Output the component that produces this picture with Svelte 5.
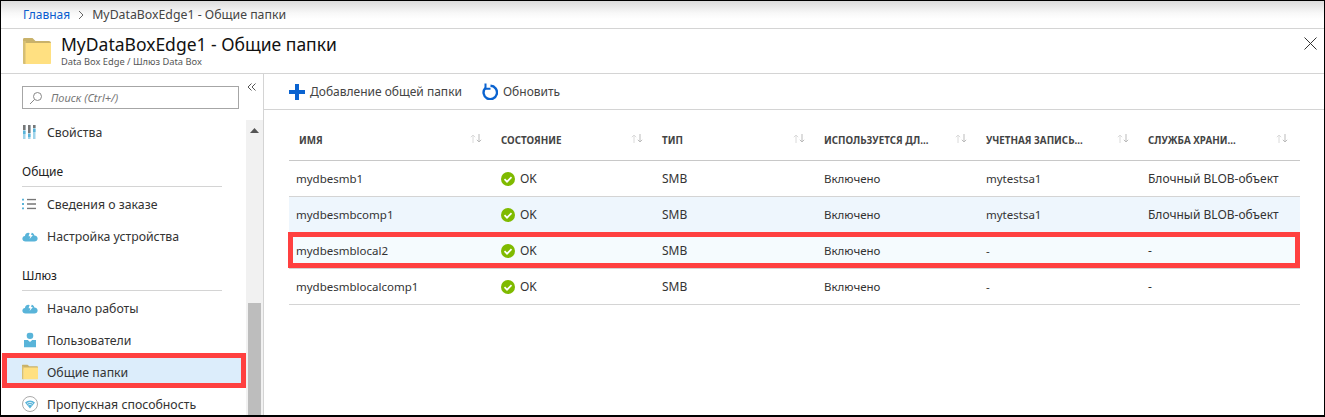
<script>
	const columns = [
		{ title: 'ИМЯ', cls: 'first' },
		{ title: 'СОСТОЯНИЕ' },
		{ title: 'ТИП' },
		{ title: 'ИСПОЛЬЗУЕТСЯ ДЛ...' },
		{ title: 'УЧЕТНАЯ ЗАПИСЬ...' },
		{ title: 'СЛУЖБА ХРАНИ...' }
	];

	const rows = [
		{ name: 'mydbesmb1', account: 'mytestsa1', service: 'Блочный BLOB-объект' },
		{ name: 'mydbesmbcomp1', account: 'mytestsa1', service: 'Блочный BLOB-объект', hover: true },
		{ name: 'mydbesmblocal2', account: '-', service: '-', marked: true },
		{ name: 'mydbesmblocalcomp1', account: '-', service: '-' }
	];
</script>

{#snippet cloud()}
	<svg class="icon" width="16" height="12" viewBox="0 0 22 16">
		<path fill="#59b4d9" d="M5 15.500c-2.800 0-4.500-1.700-4.500-3.800s1.600-3.500 3.500-3.700c.6-3 3-4.800 5.500-4.200l1 .2L9 8.500h2.500L10.500 12 15 6.500h-2.500l.8-3c2 .3 3.400 1.700 3.700 3.800 2.300 0 4.500 1.500 4.500 4s-2 4.200-4.500 4.200z"/>
	</svg>
{/snippet}

{#snippet folder(w, h)}
	<svg width={w} height={h} viewBox="0 0 28 26">
		<path fill="#c9b26a" d="M0 1.500C0 .7.500 0 1.300 0h8.200l3 3H26c1 0 2 .8 2 2v3H0z"/>
		<path fill="#d6bf74" d="M0 3h3v23H1c-.6 0-1-.4-1-1z"/>
		<path fill="#ffe081" d="M2.500 5H28v20c0 .6-.4 1-1 1H2.500z"/>
	</svg>
{/snippet}

<div class="page">
	<nav class="crumbs">
		<span class="link">Главная</span>
		<svg class="sep" width="7" height="10" viewBox="0 0 7 10"><path d="M1 1l4 4-4 4" fill="none" stroke="#666" stroke-width="1"/></svg>
		<span>MyDataBoxEdge1 - Общие папки</span>
	</nav>

	<header class="title">
		<span class="title-icon">{@render folder(28, 26)}</span>
		<div class="title-text">
			<h1>MyDataBoxEdge1 - Общие папки</h1>
			<p>Data Box Edge / Шлюз Data Box</p>
		</div>
		<svg class="close" width="13" height="13" viewBox="0 0 13 13"><path d="M.5.500l12 12M12.500.500l-12 12" stroke="#333" stroke-width="1" fill="none"/></svg>
	</header>

	<div class="body">
		<aside class="side">
			<div class="side-main">
				<div class="search-row">
					<div class="search">
						<svg width="14" height="14" viewBox="0 0 14 14"><circle cx="8.500" cy="5.500" r="4" fill="none" stroke="#888"/><path d="M5.500 8.500L1 13" stroke="#888" fill="none"/></svg>
						<span>Поиск (Ctrl+/)</span>
					</div>
					<svg class="collapse" width="9" height="8" viewBox="0 0 9 8"><path d="M4.500 .5L1 4l3.500 3.500M8.500 .5L5 4l3.500 3.500" fill="none" stroke="#555"/></svg>
				</div>

				<div class="item first-item">
					<svg class="icon" width="14" height="14" viewBox="0 0 14 14">
						<path fill="#9fd3ea" d="M1 0h2.500v14H1zM6 0h2.500v14H6zM11 0h2.500v14H11z"/>
						<path fill="#59b4d9" d="M1 6h2.500v3H1zM6 9h2.500v3H6zM11 4h2.500v3H11z"/>
						<path fill="#777" d="M1 0h2.500v5H1zM6 0h2.500v8H6zM11 0h2.500v3H11z"/>
					</svg>
					<span>Свойства</span>
				</div>

				<div class="group">Общие</div>
				<div class="item">
					<svg class="icon" width="14" height="11" viewBox="0 0 14 11">
						<path fill="#59b4d9" d="M0 0h2v2H0zM0 4.500h2v2H0zM0 9h2v2H0z"/>
						<path fill="#777" d="M5 .3h9v1.400H5zM5 4.800h9v1.400H5zM5 9.300h9v1.400H5z"/>
					</svg>
					<span>Сведения о заказе</span>
				</div>
				<div class="item">{@render cloud()}<span>Настройка устройства</span></div>

				<div class="group gateway">Шлюз</div>
				<div class="item">{@render cloud()}<span>Начало работы</span></div>
				<div class="item">
					<svg class="icon user" width="12" height="15" viewBox="0 0 12 15">
						<circle cx="6" cy="3.300" r="3.300" fill="#59b4d9"/>
						<path fill="#59b4d9" d="M0 7.500h3.800L6 9.500l2.200-2H12V15H0z"/>
					</svg>
					<span>Пользователи</span>
				</div>
				<div class="item active">
					<span class="icon">{@render folder(16, 15)}</span>
					<span>Общие папки</span>
				</div>
				<div class="item">
					<svg class="icon" width="16" height="16" viewBox="0 0 16 16">
						<circle cx="8" cy="8" r="7.500" fill="#fff" stroke="#aaa"/>
						<path fill="#59b4d9" d="M3 6.500C6 3.700 10 3.700 13 6.500L8 12.500z"/>
						<path fill="none" stroke="#fff" stroke-width=".8" d="M5 7.500c2-1.500 4-1.500 6 0M6.300 9c1-.8 2.400-.8 3.400 0"/>
					</svg>
					<span>Пропускная способность</span>
				</div>
			</div>

			<div class="scrollbar">
				<svg class="arrow" width="9" height="5" viewBox="0 0 9 5"><path d="M4.500 0L9 5H0z" fill="#555"/></svg>
				<div class="thumb"></div>
			</div>
		</aside>

		<main class="content">
			<div class="toolbar">
				<button>
					<svg width="16" height="16" viewBox="0 0 16 16"><path fill="#0a63d0" d="M6 0h4v6h6v4h-6v6H6v-6H0V6h6z"/></svg>
					<span>Добавление общей папки</span>
				</button>
				<button>
					<svg width="16" height="17" viewBox="0 0 16 17"><path fill="none" stroke="#0a63d0" stroke-width="2.400" d="M8.500 2.800A6.700 6.700 0 1 1 3.300 5"/><path fill="none" stroke="#0a63d0" stroke-width="2" d="M3.500 .5v5.200h5"/></svg>
					<span>Обновить</span>
				</button>
			</div>

			<div class="table">
				<div class="row head">
					{#each columns as col}
						<div class="cell {col.cls ?? ''}">
							<span class="label">{col.title}</span>
							<svg class="sort" width="12" height="9" viewBox="0 0 12 9">
								<path d="M3 9V1M.8 3.200L3 1l2.200 2.200" fill="none" stroke="#dadada"/>
								<path d="M9 0v8M6.800 5.800L9 8l2.200-2.200" fill="none" stroke="#bbb"/>
							</svg>
						</div>
					{/each}
				</div>
				{#each rows as row}
					<div class="row" class:hover={row.hover} class:marked={row.marked}>
						<div class="cell">{row.name}</div>
						<div class="cell status">
							<svg width="14" height="14" viewBox="0 0 14 14"><circle cx="7" cy="7" r="7" fill="#7fba00"/><path d="M3.500 7.200l2.500 2.500 4.500-4.500" fill="none" stroke="#fff" stroke-width="1.700"/></svg>
							<span>OK</span>
						</div>
						<div class="cell wide">SMB</div>
						<div class="cell">Включено</div>
						<div class="cell">{row.account}</div>
						<div class="cell wide">{row.service}</div>
					</div>
				{/each}
			</div>
		</main>
	</div>
</div>

<style>
	:global(body) {
		margin: 0;
		background: #fff;
	}

	.page {
		box-sizing: border-box;
		width: 1325px;
		height: 417px;
		display: flex;
		flex-direction: column;
		overflow: hidden;
		border: 1px solid #000;
		border-bottom-width: 2px;
		font-family: 'Noto Sans', 'Open Sans', sans-serif;
		font-size: 12px;
		color: #333;
	}

	.crumbs {
		height: 28px;
		flex: none;
		display: flex;
		align-items: center;
		gap: 8px;
		padding-left: 22px;
		box-sizing: border-box;
		border-bottom: 1px solid #d4d4d4;
		background: linear-gradient(#dcdcdc, #f8f8f8 12px, #fff 18px);
		color: #444;
		font-size: 12.300px;
	}

	.sep {
		margin-right: -1px;
	}

	.link {
		color: #0a5ccf;
		font-size: 12px;
	}

	.title {
		height: 45px;
		flex: none;
		box-sizing: border-box;
		display: flex;
		align-items: flex-start;
		border-bottom: 1px solid #d4d4d4;
		position: relative;
	}

	.title-icon {
		margin: 9px 0 0 22px;
		line-height: 0;
	}

	.title-text {
		margin: 3px 0 0 10px;
	}

	h1 {
		margin: 0;
		font-size: 17.500px;
		line-height: 24px;
		font-weight: 400;
		color: #111;
	}

	.title-text p {
		margin: 0;
		font-size: 9.300px;
		line-height: 11px;
		color: #555;
	}

	.close {
		position: absolute;
		right: 7px;
		top: 8px;
	}

	.body {
		flex: 1;
		display: flex;
		min-height: 0;
	}

	.side {
		width: 262px;
		flex: none;
		display: flex;
		border-right: 1px solid #d4d4d4;
		box-sizing: content-box;
		font-size: 12.300px;
	}

	.side-main {
		flex: 1;
		min-width: 0;
	}

	.search-row {
		height: 46px;
		display: flex;
		align-items: flex-start;
		position: relative;
	}

	.search {
		box-sizing: border-box;
		width: 217px;
		height: 23px;
		margin: 12px 0 0 21px;
		border: 1px solid #a6a6a6;
		display: flex;
		align-items: center;
		gap: 8px;
		padding-left: 6px;
		font-style: italic;
		color: #777;
		font-size: 11px;
	}

	.collapse {
		position: absolute;
		left: 246px;
		top: 9px;
	}

	.item {
		height: 32px;
		display: flex;
		align-items: center;
		padding-left: 46px;
		position: relative;
		color: #333;
	}

	.first-item {
		height: 24px;
	}

	.icon {
		position: absolute;
		left: 21px;
		top: 50%;
		transform: translateY(-50%);
		line-height: 0;
	}

	.user {
		left: 23px;
	}

	.group {
		height: 28px;
		margin: 15px 24px 0 21px;
		border-bottom: 1px solid #d4d4d4;
		line-height: 26px;
		color: #222;
		box-sizing: border-box;
		font-size: 12px;
	}

	.group + .item {
		margin-top: 1px;
	}

	.gateway {
		margin-top: 11px;
	}

	.active {
		background: #dcedfb;
		outline: 5px solid #ff4040;
		outline-offset: -5px;
		margin: -3px 0 0 1px;
		padding: 3px 0 0 45px;
		height: 35px;
		box-sizing: border-box;
	}

	.active .icon {
		left: 20px;
		top: 19px;
	}

	.scrollbar {
		width: 17px;
		flex: none;
		background: #f1f1f1;
		margin-top: 46px;
		position: relative;
		display: flex;
		flex-direction: column;
		align-items: center;
	}

	.arrow {
		margin-top: 8px;
	}

	.thumb {
		position: absolute;
		left: 2px;
		right: 2px;
		top: 183px;
		bottom: 0;
		background: #bdbdbd;
	}

	.content {
		flex: 1;
		min-width: 0;
	}

	.toolbar {
		height: 36px;
		box-sizing: border-box;
		border-bottom: 1px solid #d4d4d4;
		display: flex;
		align-items: center;
		padding-left: 25px;
		gap: 20px;
	}

	button {
		all: unset;
		display: flex;
		align-items: center;
		gap: 5px;
		color: #444;
		font: inherit;
	}

	.table {
		margin: 15px 24px 0 25px;
		font-size: 11.500px;
	}

	.row {
		display: grid;
		grid-template-columns: 205px 161px 162px 162px 162px 159px;
		height: 36px;
		align-items: center;
		border-bottom: 1px solid #d4d4d4;
		box-sizing: border-box;
		color: #333;
		position: relative;
	}

	.head {
		border-bottom: 1px solid #c8c8c8;
		font-size: 9.800px;
		font-weight: 700;
		padding-bottom: 5px;
		color: #444;
	}

	.cell {
		padding-left: 7px;
		display: flex;
		align-items: center;
		white-space: nowrap;
	}

	.wide {
		font-size: 12px;
	}

	.head .cell {
		justify-content: space-between;
		padding-right: 12px;
	}

	.head .first {
		padding-left: 10px;
	}

	.sort {
		margin-top: -3px;
	}

	.status {
		gap: 5px;
		font-size: 12px;
	}

	.hover {
		background: #eef6fd;
	}

	.marked {
		background: #f5fbfe;
	}

	.marked::after {
		content: '';
		position: absolute;
		inset: -1px 0 0 -1px;
		border: 5px solid #ff4040;
	}
</style>
